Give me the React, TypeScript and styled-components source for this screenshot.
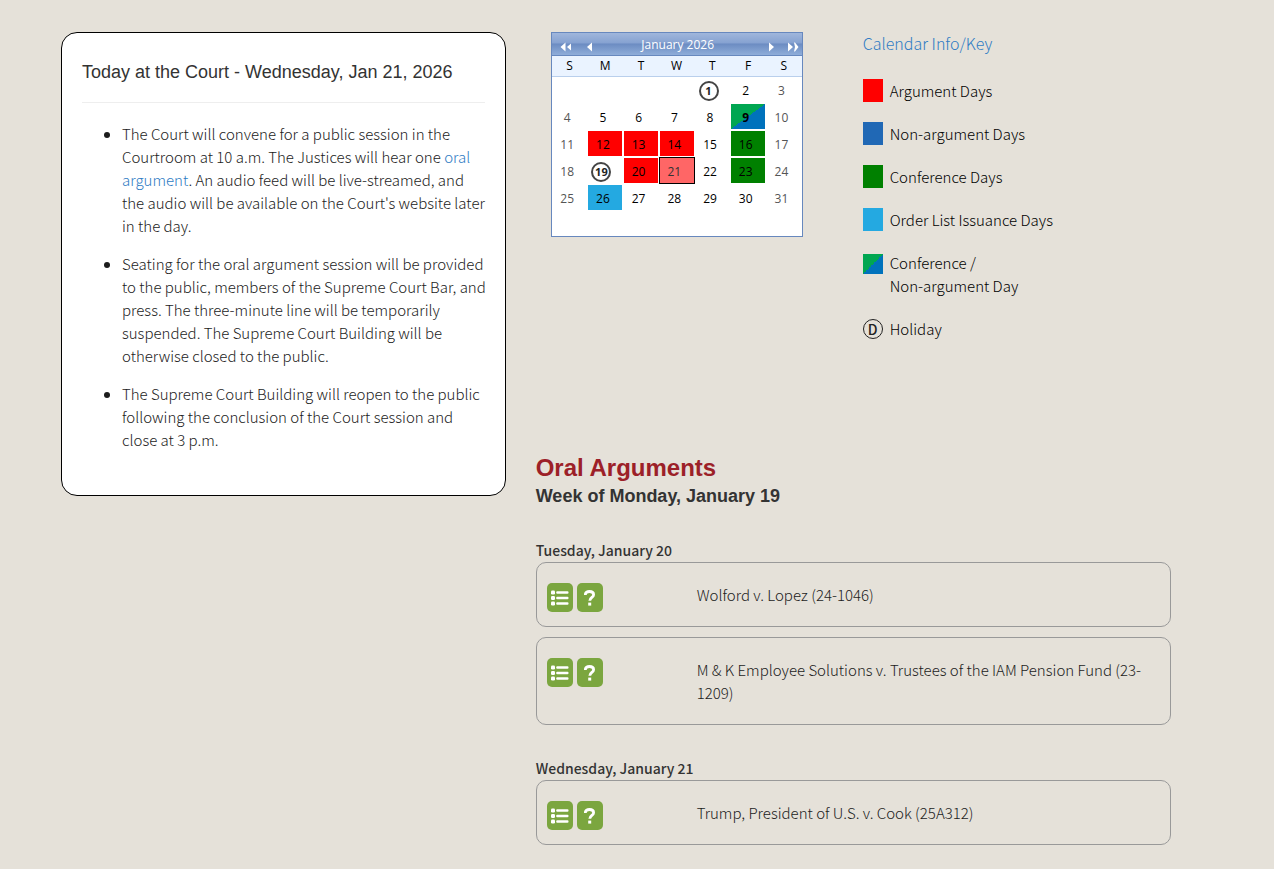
import React from "react";
import styled, { createGlobalStyle } from "styled-components";

const body = `"Noto Sans CJK SC", "Noto Sans", sans-serif`;
const heading = `"Liberation Sans", Arial, sans-serif`;
const split = "linear-gradient(to bottom right, #00a651 50%, #0072bc 50%)";

const GlobalStyle = createGlobalStyle`
  *, *::before, *::after { box-sizing: border-box; }
  body {
    margin: 0;
    background: #e5e1d9;
    color: #1c1c1c;
    font: 300 15px/23px ${body};
  }
  h1, h2, h3, p, ul { margin: 0; padding: 0; }
  h1, h2, h3 { color: #333; }
`;

const Page = styled.main`
  display: grid;
  grid-template-columns: minmax(0, 7fr) minmax(0, 10fr);
  align-items: start;
  gap: 30px;
  padding: 32px 103px 24px 61px;
`;

const TodayCard = styled.section`
  padding: 28px 12px 44px 20px;
  background: #fff;
  border: 1px solid #000;
  border-radius: 16px;
`;

const TodayTitle = styled.h1`
  margin-right: 8px;
  padding-bottom: 19px;
  border-bottom: 1px solid #eee;
  font: 18px/22px ${heading};
`;

const Notices = styled.ul`
  && { padding: 19px 0 0 40px; }
`;

const Notice = styled.li`
  & + & { margin-top: 15px; }
`;

const Link = styled.a<{ $large?: boolean }>`
  color: #2f7cc4;
  font-size: ${(p) => (p.$large ? "16px" : "inherit")};
  text-decoration: none;
  &:hover { text-decoration: underline; }
`;

const Main = styled.div`
  min-width: 0;
`;

const Overview = styled.section`
  display: flex;
  align-items: flex-start;
  gap: 60px;
  min-height: 422px;
  padding-left: 15px;
`;

const CalendarBox = styled.div`
  width: 252px;
  background: #fff;
  border: 1px solid #6788be;
  color: #000;
  font: 12px/20px "Open Sans", "Noto Sans", sans-serif;
`;

const CalendarBar = styled.div`
  display: grid;
  grid-template-columns: 24px 24px 1fr 26px 18px;
  align-items: center;
  height: 23px;
  padding-left: 2px;
  background: linear-gradient(#9fb6dc 0%, #86a2d1 45%, #6c8cc2 50%, #8fadd9 100%);
  border-bottom: 1px solid #6788be;
  color: #fff;
  text-align: center;
`;

const MonthName = styled.span`
  padding: 2px 4px 0 0;
`;

const NavButton = styled.button`
  display: grid;
  place-items: center;
  height: 20px;
  padding: 5px 0 0;
  border: 0;
  background: none;
  color: #fff;
  cursor: pointer;
`;

const Month = styled.table`
  width: 100%;
  table-layout: fixed;
  border-spacing: 0;
`;

const DayName = styled.th`
  height: 21px;
  padding: 0;
  background: #eaf3ff;
  border-bottom: 1px solid #b9cfec;
  font-weight: 400;
`;

const DayCell = styled.td<{ $last?: boolean }>`
  height: ${(p) => (p.$last ? "24px" : "27px")};
  padding: 0;
  vertical-align: top;
`;

type Kind = "argument" | "conference" | "orders" | "split" | "selected" | "holiday" | "weekend";

const fills: Partial<Record<Kind, string>> = {
  argument: "#f00",
  conference: "#008000",
  orders: "#24a9e1",
  split,
  selected: "#f66",
};

const Day = styled.button<{ $kind?: Kind }>`
  display: block;
  width: ${(p) => (p.$kind === "selected" ? "36px" : "34px")};
  height: ${(p) => (p.$kind === "selected" ? "27px" : "25px")};
  margin: ${(p) => (p.$kind === "selected" ? "-1px 0 0" : "0 1px")};
  padding: 2px 5px 0 0;
  border: ${(p) => (p.$kind === "selected" ? "1px solid #000" : "0")};
  background: ${(p) => (p.$kind && fills[p.$kind]) || "none"};
  color: ${(p) => (p.$kind === "weekend" ? "#555" : p.$kind === "selected" ? "#333" : "#000")};
  font: inherit;
  font-weight: ${(p) => (p.$kind === "split" ? 700 : 400)};
  cursor: pointer;
`;

const Ring = styled.span<{ $small?: boolean }>`
  display: grid;
  place-items: center;
  width: 20px;
  height: 20px;
  margin: ${(p) => (p.$small ? "0 auto 0 3px" : "2px 0 0")};
  border: ${(p) => (p.$small ? "2px solid #444" : "1px solid #222")};
  border-radius: 50%;
  color: #222;
  font: ${(p) => (p.$small ? `700 11px/16px "Open Sans", sans-serif` : `500 14px/18px ${body}`)};
`;

const Key = styled.div`
  color: #000;
`;

const KeyList = styled.ul`
  display: grid;
  gap: 20px;
  && { padding-top: 24px; }
  list-style: none;
`;

const KeyItem = styled.li`
  display: flex;
  gap: 7px;
`;

const Swatch = styled.span<{ $fill: string; $square?: boolean }>`
  width: 20px;
  height: ${(p) => (p.$square ? "20px" : "23px")};
  margin-top: ${(p) => (p.$square ? "3px" : "0")};
  background: ${(p) => p.$fill};
`;

const ArgumentsTitle = styled.h2`
  && { color: #9c2028; }
  font: 700 24px/28px ${heading};
`;

const WeekTitle = styled.h3`
  font: 700 18px/28px ${heading};
`;

const DaySection = styled.section`
  margin-top: 32px;
  &:first-of-type { margin-top: 29px; }
`;

const DayTitle = styled.h3`
  font-size: 14px;
  font-weight: 500;
`;

const CaseCard = styled.article`
  display: grid;
  grid-template-columns: 150px minmax(0, 1fr);
  padding: 20px 14px 20px 10px;
  border: 1px solid #999;
  border-radius: 10px;
  & + & { margin-top: 10px; }
`;

const Actions = styled.div`
  display: flex;
  gap: 4px;
  height: 23px;
`;

const ActionButton = styled.button`
  display: grid;
  place-items: center;
  width: 26px;
  height: 29px;
  padding: 0;
  border: 0;
  border-radius: 5px;
  background: #7ba63f;
  color: #fff;
  cursor: pointer;
`;

const ListIcon = () => (
  <svg width="18" height="16" viewBox="0 0 18 16" fill="currentColor" aria-hidden="true">
    <rect x="0" y="0.5" width="4" height="4" rx="1.3" />
    <rect x="0" y="6" width="4" height="4" rx="1.3" />
    <rect x="0" y="11.5" width="4" height="4" rx="1.3" />
    <rect x="5.2" y="1.2" width="12.3" height="2.6" rx="1" />
    <rect x="5.2" y="6.7" width="12.3" height="2.6" rx="1" />
    <rect x="5.2" y="12.2" width="12.3" height="2.6" rx="1" />
  </svg>
);

const QuestionIcon = () => (
  <svg width="12" height="16" viewBox="0 0 12 16" fill="none" stroke="currentColor" strokeWidth="2.8" aria-hidden="true">
    <path d="M1.2 5C1.4 2.7 3.2 1.5 5.4 1.5C7.8 1.5 9.6 2.7 9.6 4.7C9.6 7.4 5.8 7.4 5.8 10.7" />
    <path d="M5.7 12.6V15.6" strokeWidth="3" />
  </svg>
);

const Arrow = ({ back, double }: { back?: boolean; double?: boolean }) => (
  <svg width="12" height="10" viewBox="0 0 12 10" fill="currentColor" aria-hidden="true">
    <g transform={back && !double ? "translate(12 0) scale(-1 1)" : undefined}>
      {!double && <path d="M4 0.5L9 5L4 9.5Z" />}
      {double && back && <path d="M5.5 0.5L0.5 5L5.5 9.5ZM11 1.5L7 5L11 8.5Z" />}
      {double && !back && <path d="M1 0.5L6 5L1 9.5ZM7 0.5L8 0.5L11.5 5L8 9.5H7L8 5Z" />}
    </g>
  </svg>
);

const weeks: (number | null)[][] = [
  [null, null, null, null, 1, 2, 3],
  [4, 5, 6, 7, 8, 9, 10],
  [11, 12, 13, 14, 15, 16, 17],
  [18, 19, 20, 21, 22, 23, 24],
  [25, 26, 27, 28, 29, 30, 31],
];

const kinds: Record<number, Kind> = {
  1: "holiday", 9: "split", 12: "argument", 13: "argument", 14: "argument", 16: "conference",
  19: "holiday", 20: "argument", 21: "selected", 23: "conference", 26: "orders",
};

const Calendar = () => (
  <CalendarBox>
    <CalendarBar>
      <NavButton aria-label="Back three months"><Arrow back double /></NavButton>
      <NavButton aria-label="Previous month"><Arrow back /></NavButton>
      <MonthName>January 2026</MonthName>
      <NavButton aria-label="Next month"><Arrow /></NavButton>
      <NavButton aria-label="Forward three months"><Arrow double /></NavButton>
    </CalendarBar>
    <Month>
      <thead>
        <tr>{["S", "M", "T", "W", "T", "F", "S"].map((d, i) => <DayName key={i} scope="col">{d}</DayName>)}</tr>
      </thead>
      <tbody>
        {weeks.map((week, w) => (
          <tr key={w}>
            {week.map((day, i) => {
              const kind = day ? kinds[day] ?? (i % 6 === 0 ? "weekend" : undefined) : undefined;
              return (
                <DayCell key={i}>
                  {day && <Day $kind={kind}>{kind === "holiday" ? <Ring $small>{day}</Ring> : day}</Day>}
                </DayCell>
              );
            })}
          </tr>
        ))}
      </tbody>
      <tfoot><tr><DayCell colSpan={7} $last /></tr></tfoot>
    </Month>
  </CalendarBox>
);

const Case = ({ name }: { name: string }) => (
  <CaseCard>
    <Actions>
      <ActionButton aria-label="Docket"><ListIcon /></ActionButton>
      <ActionButton aria-label="Question presented"><QuestionIcon /></ActionButton>
    </Actions>
    <p>{name}</p>
  </CaseCard>
);

export default function App() {
  return (
    <>
      <GlobalStyle />
      <Page>
        <TodayCard>
          <TodayTitle>Today at the Court - Wednesday, Jan 21, 2026</TodayTitle>
          <Notices>
            <Notice>
              The Court will convene for a public session in the Courtroom at 10 a.m. The Justices will hear
              one <Link href="#arguments">oral argument</Link>. An audio feed will be live-streamed, and
              the&nbsp;audio will be available on the Court's website later in the day.
            </Notice>
            <Notice>
              Seating for the oral argument session will be provided to&nbsp;the public, members of the Supreme
              Court Bar, and press. The three-minute line will be temporarily suspended. The Supreme Court
              Building will be otherwise closed to the public.
            </Notice>
            <Notice>
              The Supreme Court Building will reopen to the public following the conclusion of the Court
              session and close&nbsp;at 3 p.m.
            </Notice>
          </Notices>
        </TodayCard>
        <Main>
          <Overview>
            <Calendar />
            <Key>
              <Link href="#key" $large>Calendar Info/Key</Link>
              <KeyList>
                <KeyItem><Swatch $fill="#f00" />Argument Days</KeyItem>
                <KeyItem><Swatch $fill="#2068b5" />Non-argument Days</KeyItem>
                <KeyItem><Swatch $fill="#008000" />Conference Days</KeyItem>
                <KeyItem><Swatch $fill="#24a9e1" />Order List Issuance Days</KeyItem>
                <KeyItem><Swatch $fill={split} $square /><span>Conference /<br />Non-argument Day</span></KeyItem>
                <KeyItem><Ring>D</Ring>Holiday</KeyItem>
              </KeyList>
            </Key>
          </Overview>
          <section id="arguments">
            <ArgumentsTitle>Oral Arguments</ArgumentsTitle>
            <WeekTitle>Week of Monday, January 19</WeekTitle>
            <DaySection>
              <DayTitle>Tuesday, January 20</DayTitle>
              <Case name="Wolford v. Lopez (24-1046)" />
              <Case name="M & K Employee Solutions v. Trustees of the IAM Pension Fund (23-1209)" />
            </DaySection>
            <DaySection>
              <DayTitle>Wednesday, January 21</DayTitle>
              <Case name="Trump, President of U.S. v. Cook (25A312)" />
            </DaySection>
          </section>
        </Main>
      </Page>
    </>
  );
}
